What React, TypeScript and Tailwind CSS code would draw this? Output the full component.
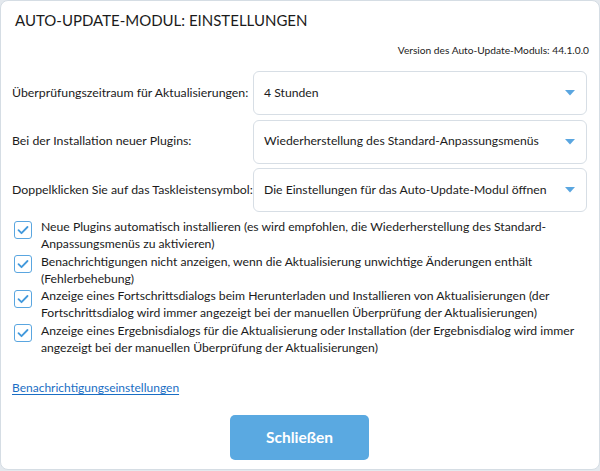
import React from 'react';

const FONT = "font-['Lato','Noto_Sans',sans-serif]";

const rows = [
  { label: 'Überprüfungszeitraum für Aktualisierungen:', value: '4 Stunden' },
  { label: 'Bei der Installation neuer Plugins:', value: 'Wiederherstellung des Standard-Anpassungsmenüs' },
  { label: 'Doppelklicken Sie auf das Taskleistensymbol:', value: 'Die Einstellungen für das Auto-Update-Modul öffnen' },
];

const options = [
  [
    'Neue Plugins automatisch installieren (es wird empfohlen, die Wiederherstellung des Standard-',
    'Anpassungsmenüs zu aktivieren)',
  ],
  ['Benachrichtigungen nicht anzeigen, wenn die Aktualisierung unwichtige Änderungen enthält', '(Fehlerbehebung)'],
  [
    'Anzeige eines Fortschrittsdialogs beim Herunterladen und Installieren von Aktualisierungen (der',
    'Fortschrittsdialog wird immer angezeigt bei der manuellen Überprüfung der Aktualisierungen)',
  ],
  [
    'Anzeige eines Ergebnisdialogs für die Aktualisierung oder Installation (der Ergebnisdialog wird immer',
    'angezeigt bei der manuellen Überprüfung der Aktualisierungen)',
  ],
];

const Select: React.FC<{ value: string }> = ({ value }) => (
  <div className="flex-1 h-[44px] flex items-center justify-between pl-[10px] pr-[10px] border border-[#d7dee5] rounded-[6px] bg-white">
    <span className="text-[12.2px] text-[#1b1b1b] whitespace-nowrap">{value}</span>
    <svg width="10" height="6" viewBox="0 0 10 6" className="mr-[1px]">
      <path d="M0 0h10L5 5.5z" fill="#5aa6e0" />
    </svg>
  </div>
);

const Checkbox: React.FC = () => (
  <div className="w-[18px] h-[18px] shrink-0 rounded-[3px] border border-[#5aa6e0] bg-white flex items-center justify-center">
    <svg width="12" height="10" viewBox="0 0 12 10">
      <path d="M1.5 5.2l3 3L10.5 2" fill="none" stroke="#4299dc" strokeWidth="1.8" strokeLinecap="round" strokeLinejoin="round" />
    </svg>
  </div>
);

const App: React.FC = () => {
  return (
    <div className={`w-[600px] h-[471px] bg-[#e4e9ee] ${FONT}`}>
      <div className="h-[470px] flex flex-col bg-white border border-[#d5dde4] rounded-[8px] pl-[11px] pr-[12px] text-[#1b1b1b]">
        <h1 className="pt-[9px] pl-[3px] text-[15px] leading-[20px] font-normal">AUTO-UPDATE-MODUL: EINSTELLUNGEN</h1>

        <div className="mt-[13px] text-right text-[10.2px] leading-[14px] -mr-[2px]">Version des Auto-Update-Moduls: 44.1.0.0</div>

        <div className="mt-[14px] flex flex-col gap-[4.5px]">
          {rows.map((r) => (
            <div key={r.label} className="flex items-center">
              <div className="w-[241px] text-[12.3px] whitespace-nowrap">{r.label}</div>
              <Select value={r.value} />
            </div>
          ))}
        </div>

        <div className="mt-[6px] flex flex-col">
          {options.map((lines) => (
            <div key={lines[0]} className="flex items-start gap-[9px] pl-[2px]">
              <div className="pt-[2.5px]">
                <Checkbox />
              </div>
              <div className="text-[12.2px] leading-[17.25px]">
                {lines.map((l) => (
                  <div key={l} className="whitespace-nowrap">{l}</div>
                ))}
              </div>
            </div>
          ))}
        </div>

        <div className="mt-[18px]">
          <a href="#" className="text-[12px] leading-[16px] text-[#1a6ec4] underline underline-offset-[2px]">
            Benachrichtigungseinstellungen
          </a>
        </div>

        <button className="mt-[17px] mx-auto w-[139px] h-[45px] rounded-[5px] bg-[#5aa9e1] text-white text-[15.5px] font-bold">
          Schließen
        </button>
      </div>
    </div>
  );
};

export default App;
